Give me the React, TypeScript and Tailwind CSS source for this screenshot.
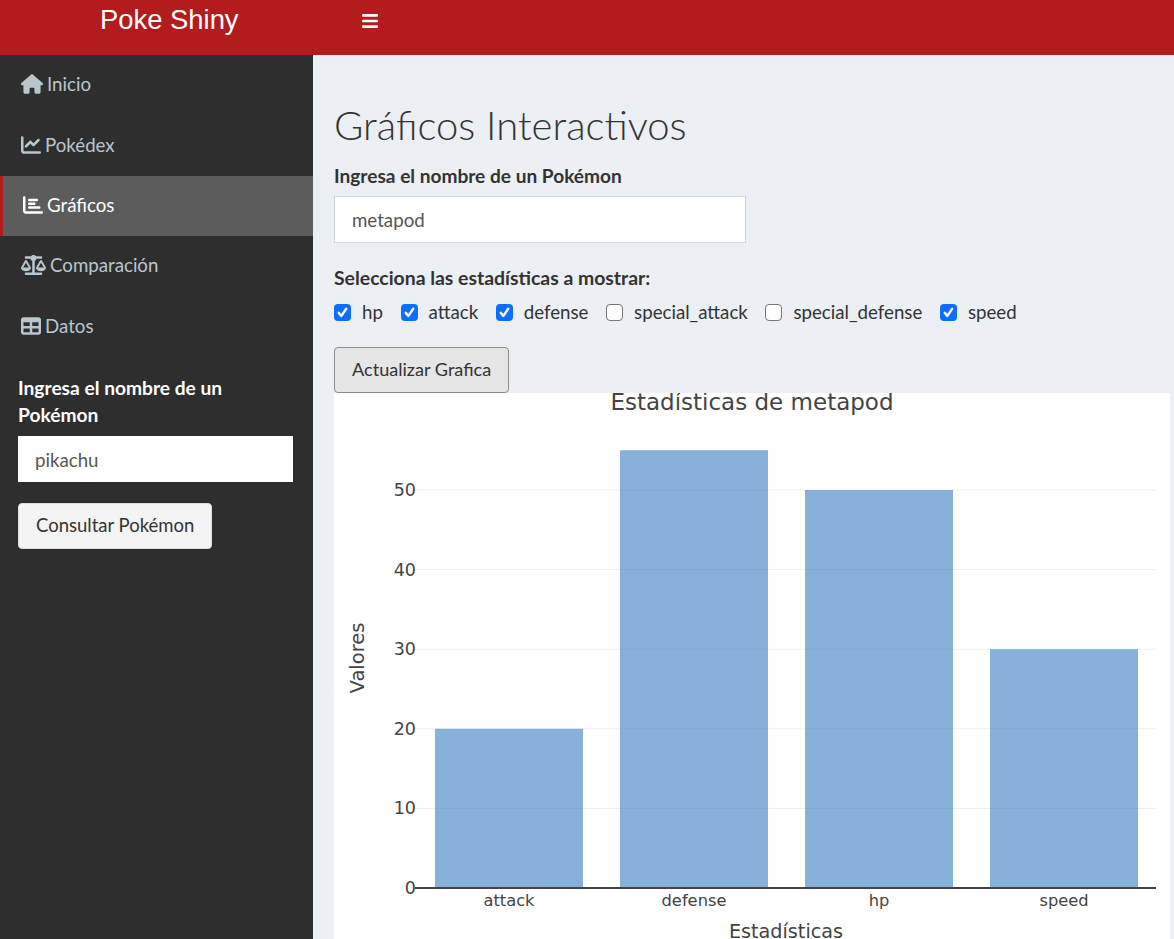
import { FaBars } from 'react-icons/fa';
import { FaChartBar, FaChartLine, FaHouse, FaScaleBalanced, FaTable } from 'react-icons/fa6';

const menu = [
  { label: 'Inicio', icon: FaHouse, iconClass: 'w-[22px] h-[20px]' },
  { label: 'Pokédex', icon: FaChartLine, iconClass: 'w-[20px] h-[20px]' },
  { label: 'Gráficos', icon: FaChartBar, iconClass: 'w-[20px] h-[20px]', active: true },
  { label: 'Comparación', icon: FaScaleBalanced, iconClass: 'w-[25px] h-[20px]' },
  { label: 'Datos', icon: FaTable, iconClass: 'w-[20px] h-[20px]' },
];

const stats = [
  { name: 'hp', checked: true },
  { name: 'attack', checked: true },
  { name: 'defense', checked: true },
  { name: 'special_attack', checked: false },
  { name: 'special_defense', checked: false },
  { name: 'speed', checked: true },
];

const bars = [
  { name: 'attack', x: 101, value: 20 },
  { name: 'defense', x: 286, value: 55 },
  { name: 'hp', x: 471, value: 50 },
  { name: 'speed', x: 656, value: 30 },
];

function StatChart() {
  // plot origin sits at y=495 inside the svg, 7.96px per unit
  const zeroY = 495;
  const unit = 7.96;
  const chartFont = { fontFamily: '"DejaVu Sans", sans-serif' };

  return (
    <svg className="block w-[836px] h-[546px] bg-white" viewBox="0 0 836 546" style={chartFont}>
      <text x="418" y="17" textAnchor="middle" fontSize="23" fill="#444">
        Estadísticas de metapod
      </text>
      {[10, 20, 30, 40, 50].map((tick) => (
        <line key={tick} x1="81" x2="822" y1={zeroY - tick * unit} y2={zeroY - tick * unit} stroke="#eeeeee" />
      ))}
      {bars.map((bar) => (
        <rect
          key={bar.name}
          x={bar.x}
          y={zeroY - bar.value * unit}
          width="148"
          height={bar.value * unit}
          fill="#377dbe"
          fillOpacity="0.6"
        />
      ))}
      <line x1="81" x2="822" y1={zeroY} y2={zeroY} stroke="#444" strokeWidth="2" />
      {[0, 10, 20, 30, 40, 50].map((tick) => (
        <text key={tick} x="82" y={zeroY - tick * unit + 6} textAnchor="end" fontSize="17.5" fill="#444">
          {tick}
        </text>
      ))}
      {bars.map((bar) => (
        <text key={bar.name} x={bar.x + 74} y="513" textAnchor="middle" fontSize="16.3" fill="#444">
          {bar.name}
        </text>
      ))}
      <text x="452" y="545" textAnchor="middle" fontSize="19.2" fill="#444">
        Estadísticas
      </text>
      <text transform="translate(30 265) rotate(-90)" textAnchor="middle" fontSize="19.5" fill="#444">
        Valores
      </text>
    </svg>
  );
}

function StatCheck({ name, checked }: { name: string; checked: boolean }) {
  return (
    <label className="flex items-center gap-[11px]">
      {checked ? (
        <span className="flex size-[17px] items-center justify-center rounded-[4px] bg-[#0d6efd]">
          <svg className="size-[15px]" viewBox="0 0 20 20" fill="none" stroke="#fff" strokeWidth="3.2" strokeLinecap="round" strokeLinejoin="round">
            <path d="M5 10.5l3.5 4L15 5" />
          </svg>
        </span>
      ) : (
        <span className="size-[17px] rounded-[4px] border border-[#767676] bg-white" />
      )}
      <span>{name}</span>
    </label>
  );
}

export default function App() {
  return (
    <div
      className="flex h-[939px] w-[1174px] flex-col overflow-hidden bg-[#eceff4] text-[18.7px] text-[#333]"
      style={{ fontFamily: 'Lato, sans-serif' }}
    >
      <header className="flex h-[55px] shrink-0 bg-[#b21c1c] text-white">
        <div className="w-[313px] pl-[100px] pt-[2px] text-[27.4px] leading-[36px]" style={{ fontFamily: '"Liberation Sans", sans-serif' }}>
          Poke Shiny
        </div>
        <FaBars className="ml-[48px] mt-[12px] h-[18px] w-[18px]" />
      </header>

      <div className="flex min-h-0 flex-1">
        <aside className="w-[313px] shrink-0 bg-[#2e2e2e]">
          <nav className="flex flex-col">
            {menu.map((item) => {
              const Icon = item.icon;
              return (
                <a
                  key={item.label}
                  className={
                    item.active
                      ? 'flex h-[60.4px] items-center border-l-[3px] border-[#b21c1c] bg-[#5c5c5c] pb-[2px] pl-[20px] text-white'
                      : 'flex h-[60.4px] items-center pb-[2px] pl-[21px] text-[#b8c7ce]'
                  }
                >
                  <Icon className={`${item.iconClass} mr-[4px]`} />
                  {item.label}
                </a>
              );
            })}
          </nav>

          <div className="px-[18px] pt-[17px]">
            <p className="w-[240px] text-[19.2px] font-bold leading-[27px] text-white">Ingresa el nombre de un Pokémon</p>
            <div className="mt-[8px] flex h-[46px] w-[275px] items-center bg-white px-[17px] pt-[2px] text-[#555]">pikachu</div>
            <button className="mt-[21px] h-[46px] rounded-[4px] border border-[#ddd] bg-[#f4f4f4] px-[17px] text-[18.5px] text-[#333]">
              Consultar Pokémon
            </button>
          </div>
        </aside>

        <main className="min-w-0 flex-1 pl-[21px] pr-[4px] pt-[42px]">
          <h1 className="text-[40px] font-light leading-[56px]">Gráficos Interactivos</h1>
          <p className="mt-[10px] text-[19.1px] font-bold leading-[25px]">Ingresa el nombre de un Pokémon</p>
          <div className="mt-[8px] flex h-[47px] w-[412px] items-center border border-[#d2d6de] bg-white px-[17px] pt-[2px] text-[#555]">
            metapod
          </div>
          <p className="mt-[22px] text-[19.4px] font-bold leading-[25px]">Selecciona las estadísticas a mostrar:</p>
          <div className="mt-[10px] flex h-[25px] items-center gap-[17.6px]">
            {stats.map((stat) => (
              <StatCheck key={stat.name} name={stat.name} checked={stat.checked} />
            ))}
          </div>
          <button className="mt-[22px] block h-[46px] rounded-[4px] border border-[#8c8c8c] bg-[#e6e6e6] px-[17px] text-[18.1px] text-[#333]">
            Actualizar Grafica
          </button>
          <StatChart />
        </main>
      </div>
    </div>
  );
}
